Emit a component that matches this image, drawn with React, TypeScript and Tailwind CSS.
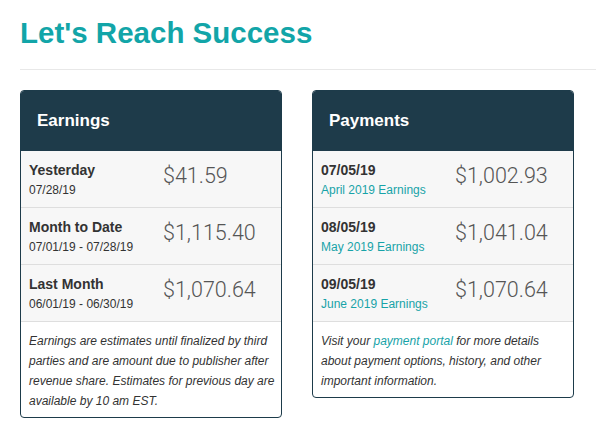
const earnings = [
  { label: "Yesterday", sub: "07/28/19", amount: "$41.59" },
  { label: "Month to Date", sub: "07/01/19 - 07/28/19", amount: "$1,115.40" },
  { label: "Last Month", sub: "06/01/19 - 06/30/19", amount: "$1,070.64" },
];

const payments = [
  { label: "07/05/19", sub: "April 2019 Earnings", amount: "$1,002.93" },
  { label: "08/05/19", sub: "May 2019 Earnings", amount: "$1,041.04" },
  { label: "09/05/19", sub: "June 2019 Earnings", amount: "$1,070.64" },
];

type Row = { label: string; sub: string; amount: string };

function Card({
  title,
  rows,
  subClass,
  children,
}: {
  title: string;
  rows: Row[];
  subClass: string;
  children: React.ReactNode;
}) {
  return (
    <div className="w-[262px] border border-[#1d3b4a] rounded-[4px] overflow-hidden bg-white">
      <div className="h-[60px] bg-[#1e3b4a] flex items-center px-4">
        <h2 className="text-[17px] font-bold text-white">{title}</h2>
      </div>
      {rows.map((r) => (
        <div
          key={r.label}
          className="grid grid-cols-[134px_1fr] px-2 pt-[9px] pb-[7px] bg-[#f7f7f7] border-b border-[#dedede]"
        >
          <div>
            <div className="text-[14px] leading-[20px] font-bold text-[#333]">{r.label}</div>
            <div className={`text-[12px] leading-[20px] ${subClass}`}>{r.sub}</div>
          </div>
          <div className="font-[family-name:Roboto,sans-serif] text-[21.5px] leading-[31px] font-light text-[#555]">
            {r.amount}
          </div>
        </div>
      ))}
      <div className="pl-2 pr-1 pt-[9px] pb-[6px] text-[12px] leading-[20px] italic text-[#333]">
        {children}
      </div>
    </div>
  );
}

export default function App() {
  return (
    <div className="w-[596px] h-[438px] bg-white font-[family-name:Liberation_Sans,Arial,sans-serif]">
      <h1 className="pl-5 pt-[17px] text-[29.5px] leading-[32px] font-bold text-[#12a5a8]">
        Let's Reach Success
      </h1>
      <div className="ml-5 mt-5 h-px bg-[#e8e8e8]" />
      <div className="flex items-start gap-[30px] px-5 mt-5">
        <Card title="Earnings" rows={earnings} subClass="text-[#333]">
          Earnings are estimates until finalized by third parties and are amount due to
          publisher after revenue share. Estimates for previous day are available by 10 am EST.
        </Card>
        <Card title="Payments" rows={payments} subClass="text-[#17a3a8]">
          Visit your <span className="text-[#17a3a8]">payment portal</span> for more details
          about payment options, history, and other important information.
        </Card>
      </div>
    </div>
  );
}
